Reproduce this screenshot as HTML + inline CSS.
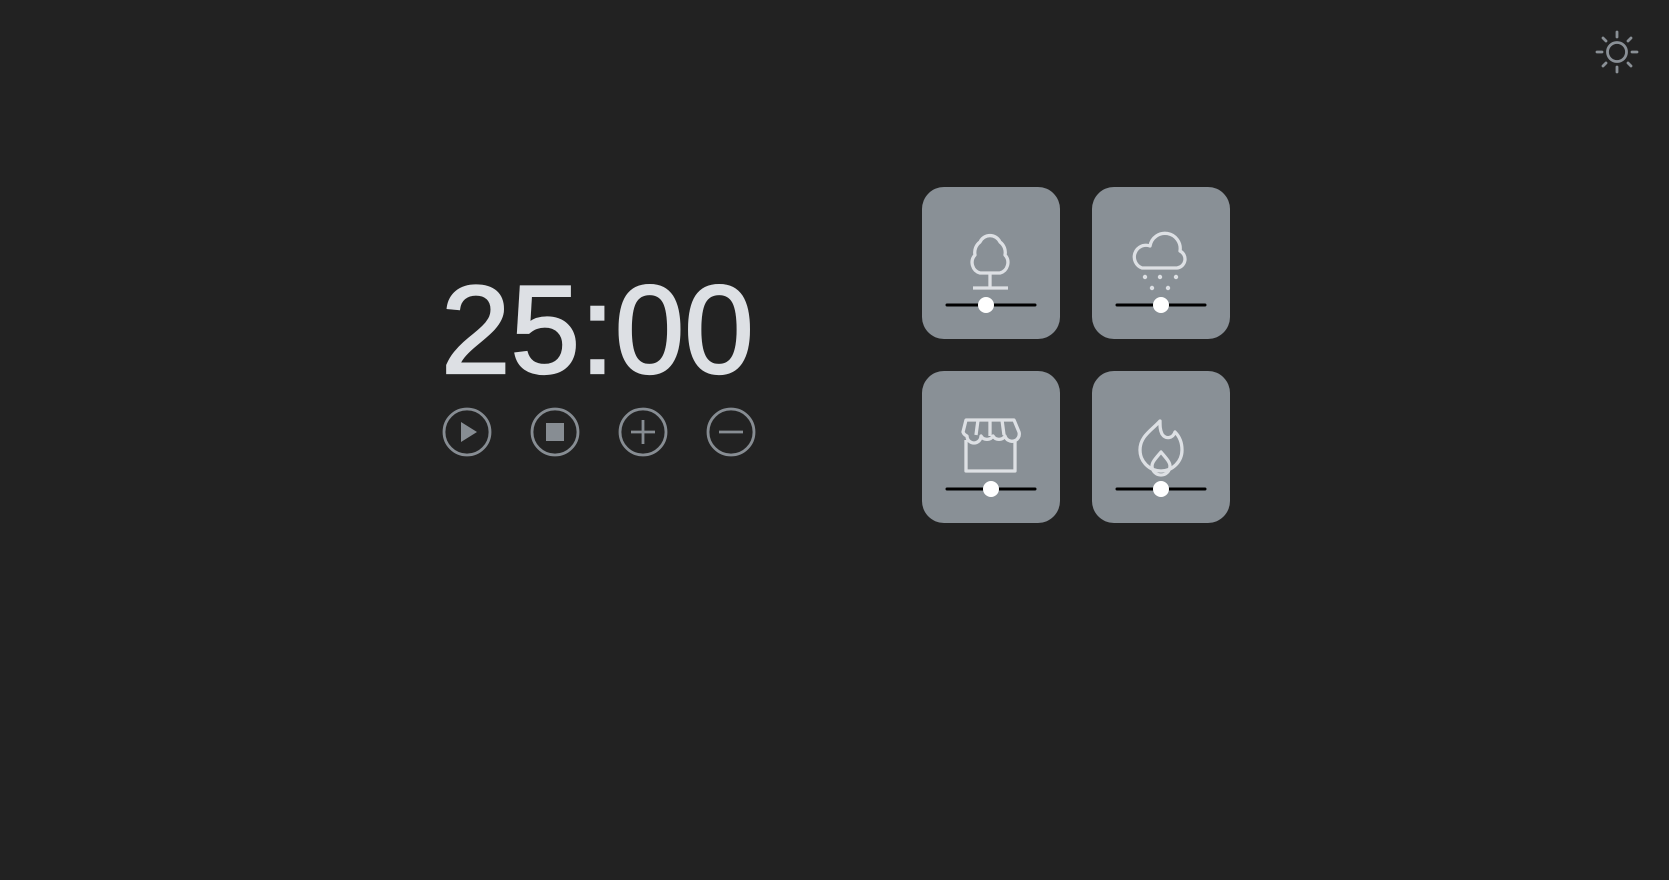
<!DOCTYPE html>
<html><head><meta charset="utf-8"><style>
html,body{margin:0;padding:0;background:#222222;width:1669px;height:880px;overflow:hidden;font-family:"Liberation Sans",sans-serif}
.t{position:absolute;left:441px;top:256px;font-size:125px;font-weight:normal;-webkit-text-stroke:2.2px #dde0e4;color:#dde0e4;letter-spacing:0px;line-height:150px}
svg{position:absolute;left:0;top:0}
</style></head><body>
<div class="t">25:00</div>
<svg width="1669" height="880" viewBox="0 0 1669 880">
<g fill="none" stroke="#878d93" stroke-width="2.8">
<circle cx="467" cy="432" r="23"/><circle cx="555" cy="432" r="23"/><circle cx="643" cy="432" r="23"/><circle cx="731" cy="432" r="23"/>
<path d="M631 432H655M643 420V444M719 432H743"/>
</g>
<path d="M461 422L477 432L461 442Z" fill="#878d93"/>
<rect x="546" y="423" width="18" height="18" fill="#878d93"/>
<g stroke="#8a9096" stroke-width="2.8" fill="none" stroke-linecap="round">
<circle cx="1617" cy="52" r="9.5"/>
<path d="M1617 32V37M1617 67V72M1597 52H1602M1632 52H1637M1603 38L1606 41M1628 63L1631 66M1631 38L1628 41M1606 63L1603 66"/>
</g>
<g fill="#899096">
<rect x="922" y="187" width="138" height="152" rx="22"/>
<rect x="1092" y="187" width="138" height="152" rx="22"/>
<rect x="922" y="371" width="138" height="152" rx="22"/>
<rect x="1092" y="371" width="138" height="152" rx="22"/>
</g>
<g stroke="#000" stroke-width="3" stroke-linecap="round">
<path d="M947 305H1035M1117 305H1205M947 489H1035M1117 489H1205"/>
</g>
<g fill="#fff"><circle cx="986" cy="305" r="8"/><circle cx="1161" cy="305" r="8"/><circle cx="991" cy="489" r="8"/><circle cx="1161" cy="489" r="8"/></g>
<g stroke="#dde0e4" stroke-width="3.3" fill="none" stroke-linejoin="round">
<path d="M990 287V273M973 288H1008M990 273H980A11 11 0 0 1 975 255A13 13 0 0 1 980 242A11 11 0 0 1 1000 242A13 13 0 0 1 1005 255A11 11 0 0 1 1000 273Z"/>
<path d="M1142 268H1177A9 9 0 0 0 1180 251A15 15 0 0 0 1150 246A11 11 0 0 0 1142 268Z"/>
<path d="M966 440V471H1015V440M966 420H1014L1019 432A7 7 0 0 1 1005 436A7 7 0 0 1 993 436A7 7 0 0 1 981 436A7 7 0 0 1 967 436A7 7 0 0 1 963 432ZM978 420L976 435M990 420V436M1002 420L1004 435"/>
<path d="M1160 421C1152 430 1140 436 1140 450A21 21 0 0 0 1182 450C1182 442 1179 436 1175 432C1173 438 1166 440 1162 434C1160 430 1160 426 1160 421Z"/>
<path d="M1161 452C1156 458 1152 462 1152 466A9 9 0 0 0 1170 466C1170 462 1166 458 1161 452Z"/>
</g>
<g fill="#dde0e4"><circle cx="1145" cy="277" r="2.2"/><circle cx="1160" cy="277" r="2.2"/><circle cx="1176" cy="277" r="2.2"/><circle cx="1152" cy="288" r="2.2"/><circle cx="1168" cy="288" r="2.2"/></g>
</svg>
</body></html>
